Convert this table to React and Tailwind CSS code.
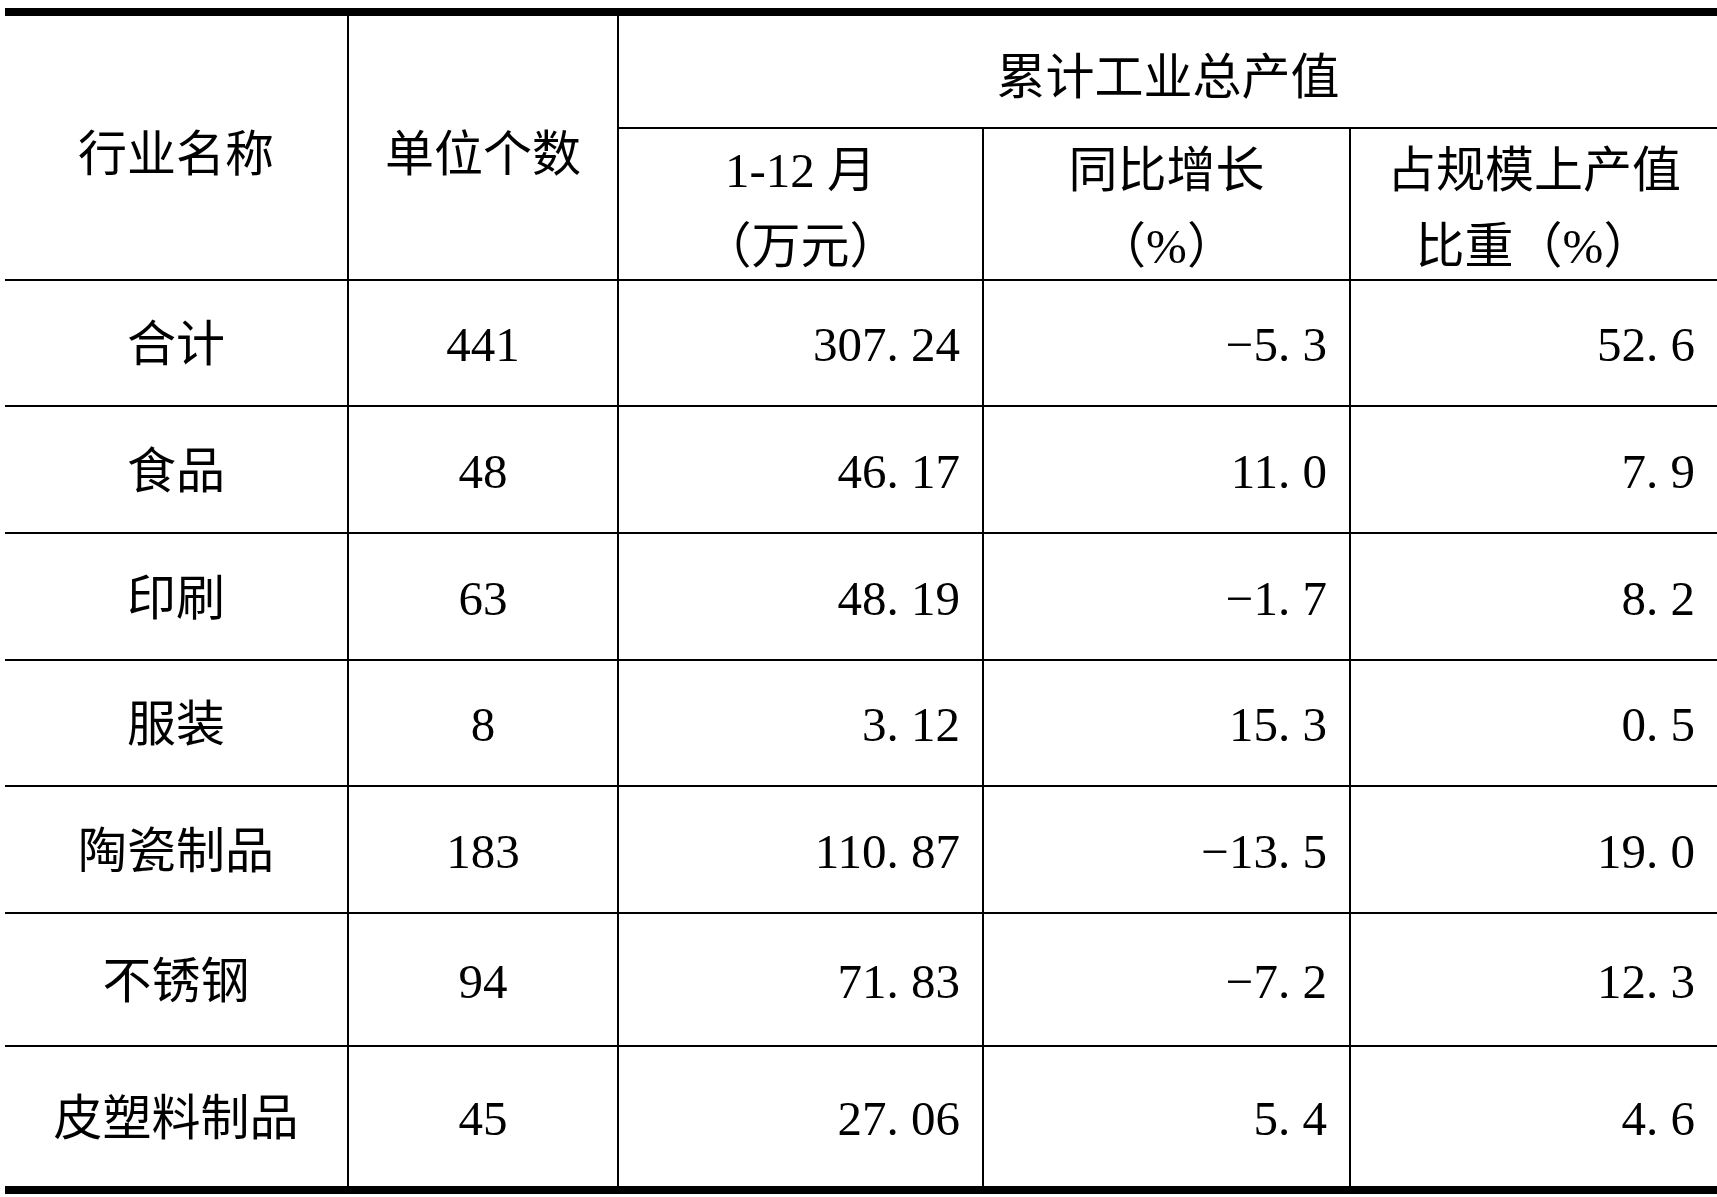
import React from "react"

const rows = [
  { name: "合计", count: "441", value: "307.24", growth: "−5.3", share: "52.6", h: "h-[126px]" },
  { name: "食品", count: "48", value: "46.17", growth: "11.0", share: "7.9", h: "h-[127px]" },
  { name: "印刷", count: "63", value: "48.19", growth: "−1.7", share: "8.2", h: "h-[127px]" },
  { name: "服装", count: "8", value: "3.12", growth: "15.3", share: "0.5", h: "h-[126px]" },
  { name: "陶瓷制品", count: "183", value: "110.87", growth: "−13.5", share: "19.0", h: "h-[127px]" },
  { name: "不锈钢", count: "94", value: "71.83", growth: "−7.2", share: "12.3", h: "h-[133px]" },
  { name: "皮塑料制品", count: "45", value: "27.06", growth: "5.4", share: "4.6", h: "h-[139px]", last: true },
]

// SimSun-style numbers: the dot takes a half-width cell
function Num({ text }) {
  return (
    <span>
      {text.split("").map((c, i) =>
        c === "." ? (
          <span key={i} className="inline-block w-[0.5em] text-left">.</span>
        ) : (
          <span key={i}>{c}</span>
        )
      )}
    </span>
  )
}

export default function App() {
  const font = "font-['Liberation_Serif','Noto_Sans_CJK_SC',serif]"
  return (
    <div className={`bg-white min-h-[1197px] pl-[5px] pt-[8px] text-black text-[49px] ${font}`}>
      <div className="w-[1712px] border-t-8 border-b-8 border-black grid grid-cols-[344px_270px_365px_367px_366px]">
        {/* Header */}
        <div className="row-span-2 border-r-2 border-b-2 border-black flex items-center justify-center pt-[14px]">
          行业名称
        </div>
        <div className="row-span-2 border-r-2 border-b-2 border-black flex items-center justify-center pt-[14px]">
          单位个数
        </div>
        <div className="col-span-3 h-[113px] border-b-2 border-black flex items-center justify-center pt-[12px]">
          累计工业总产值
        </div>
        <div className="h-[152px] border-r-2 border-b-2 border-black flex items-center justify-center text-center leading-[76px] pt-[10px]">
          <div>
            1-12 月<br />（万元）
          </div>
        </div>
        <div className="h-[152px] border-r-2 border-b-2 border-black flex items-center justify-center text-center leading-[76px] pt-[10px]">
          <div>
            同比增长<br />（%）
          </div>
        </div>
        <div className="h-[152px] border-b-2 border-black flex items-center justify-center text-center leading-[76px] pt-[10px]">
          <div>
            占规模上产值<br />比重（%）
          </div>
        </div>

        {/* Body */}
        {rows.map((r) => (
          <React.Fragment key={r.name}>
            <div className={`${r.h} border-r-2 border-black flex items-center justify-center pt-[4px] ${r.last ? "" : "border-b-2"}`}>
              {r.name}
            </div>
            <div className={`${r.h} border-r-2 border-black flex items-center justify-center pt-[4px] ${r.last ? "" : "border-b-2"}`}>
              <Num text={r.count} />
            </div>
            <div className={`${r.h} border-r-2 border-black flex items-center justify-end pr-[22px] pt-[4px] ${r.last ? "" : "border-b-2"}`}>
              <Num text={r.value} />
            </div>
            <div className={`${r.h} border-r-2 border-black flex items-center justify-end pr-[22px] pt-[4px] ${r.last ? "" : "border-b-2"}`}>
              <Num text={r.growth} />
            </div>
            <div className={`${r.h} border-black flex items-center justify-end pr-[22px] pt-[4px] ${r.last ? "" : "border-b-2"}`}>
              <Num text={r.share} />
            </div>
          </React.Fragment>
        ))}
      </div>
    </div>
  )
}
